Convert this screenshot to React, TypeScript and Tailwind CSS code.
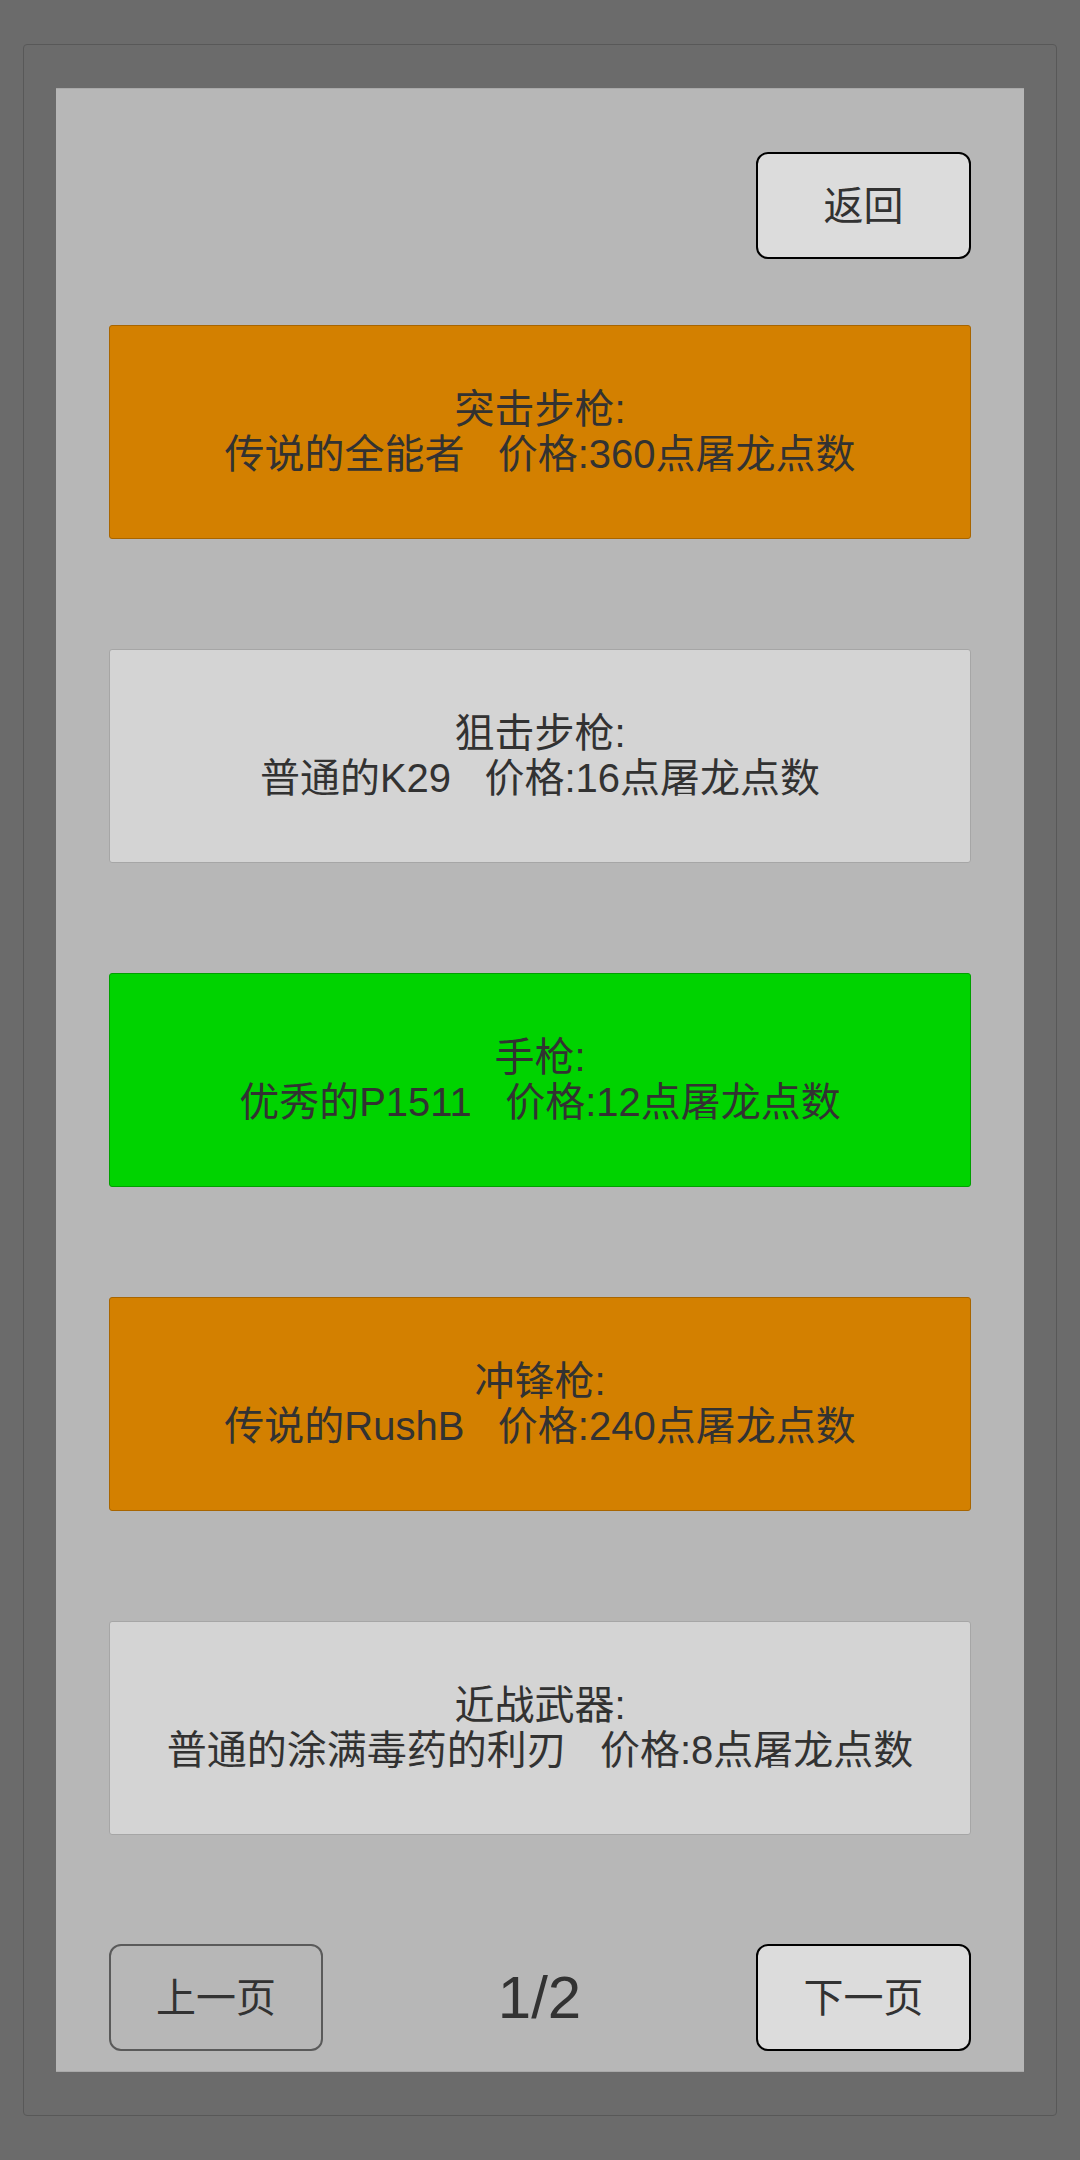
const FONT = { fontFamily: '"Liberation Sans", "Noto Sans CJK SC", sans-serif' };

type Item = { kind: string; desc: string; price: number; tone: "legend" | "normal" | "good" };

const items: Item[] = [
  { kind: "突击步枪", desc: "传说的全能者", price: 360, tone: "legend" },
  { kind: "狙击步枪", desc: "普通的K29", price: 16, tone: "normal" },
  { kind: "手枪", desc: "优秀的P1511", price: 12, tone: "good" },
  { kind: "冲锋枪", desc: "传说的RushB", price: 240, tone: "legend" },
  { kind: "近战武器", desc: "普通的涂满毒药的利刃", price: 8, tone: "normal" },
];

const toneClass: Record<Item["tone"], string> = {
  legend: "bg-[#d38000] border-[#a86500]",
  normal: "bg-[#d4d4d4] border-[#a6a6a6]",
  good: "bg-[#00d300] border-[#00a000]",
};

function ShopItem({ item }: { item: Item }) {
  return (
    <div
      className={`h-[214px] border rounded-[3px] flex flex-col items-center justify-center text-[40px] leading-[45px] text-[#323232] whitespace-pre ${toneClass[item.tone]}`}
    >
      <span>{item.kind}:</span>
      <span>
        {item.desc}
        {"   "}价格:{item.price}点屠龙点数
      </span>
    </div>
  );
}

export default function App() {
  return (
    <div className="w-[1080px] h-[2160px] bg-[#6b6b6b] pt-[44px] px-[23px]" style={FONT}>
      <div className="h-[2072px] border border-[#585858] rounded-[4px] px-[32px] py-[43px]">
        <div className="h-full bg-[#b7b7b7] border-t border-b border-[#a9a9a9] px-[53px] pt-[63px] flex flex-col">
          <div className="flex justify-end">
            <button className="w-[215px] h-[107px] bg-[#dcdcdc] border-2 border-black rounded-[12px] text-[40px] text-[#323232]">
              返回
            </button>
          </div>

          <div className="mt-[66px] flex flex-col gap-[110px]">
            {items.map((item) => (
              <ShopItem key={item.kind} item={item} />
            ))}
          </div>

          <div className="mt-[109px] flex items-center justify-between">
            <button className="w-[214px] h-[107px] border-2 border-[#5a5a5a] rounded-[12px] text-[40px] text-[#323232]">
              上一页
            </button>
            <span className="text-[60px] text-[#323232]">1/2</span>
            <button className="w-[215px] h-[107px] bg-[#dcdcdc] border-2 border-black rounded-[12px] text-[40px] text-[#323232]">
              下一页
            </button>
          </div>
        </div>
      </div>
    </div>
  );
}
